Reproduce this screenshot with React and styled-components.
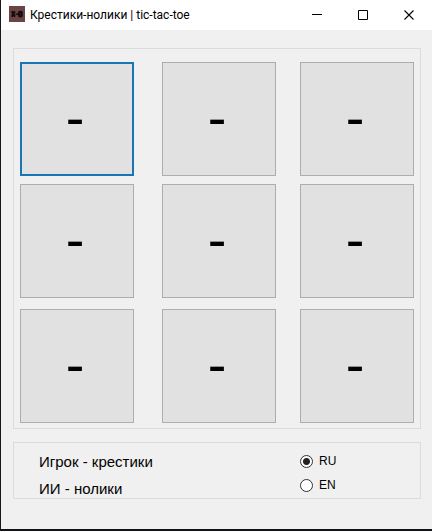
import React, { useState } from 'react'
import styled, { createGlobalStyle } from 'styled-components'

const texts = {
  RU: { player: 'Игрок - крестики', ai: 'ИИ - нолики' },
  EN: { player: 'Player - crosses', ai: 'AI - noughts' },
}

const App = () => {

  const [board, setBoard] = useState(Array(9).fill('-'))
  const [active, setActive] = useState(0)
  const [lang, setLang] = useState('RU')

  const handleMove = (index) => {
    setActive(index)
    if (board[index] !== '-') return
    setBoard(board.map((cell, i) => (i === index ? 'X' : cell)))
  }

  return (
    <>
      <GlobalStyle />
      <Window>
        <TitleBar>
          <AppIcon viewBox="0 0 16 16" aria-hidden="true">
            <rect width="16" height="16" fill="#6b4543" />
            <path d="M2.8 5.3l3 5.4M5.8 5.3l-3 5.4" stroke="#150b0c" strokeWidth="2" />
            <path d="M6.5 8.2h2.5" stroke="#150b0c" strokeWidth="1.5" />
            <rect x="10" y="5.8" width="2.8" height="4.6" rx="1" fill="#3a2021" stroke="#150b0c" strokeWidth="2" />
          </AppIcon>
          <Title>Крестики-нолики | tic-tac-toe</Title>
          <WindowButton aria-label="Minimize">
            <svg width="11" height="11" viewBox="0 0 11 11"><path d="M0 4.5h10" stroke="#000" /></svg>
          </WindowButton>
          <WindowButton aria-label="Maximize">
            <svg width="11" height="11" viewBox="0 0 11 11"><path d="M.5 .5h9v9h-9z" fill="none" stroke="#000" /></svg>
          </WindowButton>
          <WindowButton aria-label="Close">
            <svg width="11" height="11" viewBox="0 0 11 11"><path d="M.5 .5l9 9M9.5 .5l-9 9" stroke="#000" strokeWidth="1.1" /></svg>
          </WindowButton>
        </TitleBar>
        <Content>
          <Board>
            {[0, 3, 6].map((start) => (
              <Row key={start}>
                {board.slice(start, start + 3).map((cell, i) => (
                  <Cell key={start + i} $active={active === start + i} onClick={() => handleMove(start + i)}>
                    {cell}
                  </Cell>
                ))}
              </Row>
            ))}
          </Board>
          <Info>
            <Players>
              <p>{texts[lang].player}</p>
              <p>{texts[lang].ai}</p>
            </Players>
            <Languages>
              {['RU', 'EN'].map((code) => (
                <RadioLabel key={code} htmlFor={`lang-${code}`}>
                  <Radio id={`lang-${code}`} name="lang" checked={lang === code} onChange={() => setLang(code)} />
                  {code}
                </RadioLabel>
              ))}
            </Languages>
          </Info>
        </Content>
      </Window>
    </>
  )
}

const GlobalStyle = createGlobalStyle`
  * {
    box-sizing: border-box;
  }
  body {
    margin: 0;
    font-family: "Liberation Sans", Arial, sans-serif;
    color: #000;
  }
`

const Window = styled.div`
  display: flex;
  flex-direction: column;
  min-height: 100vh;
  background-color: #f0f0f0;
  border-left: 1px solid #1a1718;
  border-bottom: 2px solid #101214;
`

const TitleBar = styled.header`
  display: flex;
  align-items: center;
  height: 30px;
  padding-left: 8px;
  background-color: #fff;
`

const AppIcon = styled.svg`
  width: 16px;
  height: 16px;
  margin-bottom: 2px;
`

const Title = styled.h1`
  flex: 1;
  margin: 0 0 0 5px;
  font-family: Roboto, "Open Sans", sans-serif;
  font-size: 12px;
  font-weight: 400;
  line-height: 16px;
`

const WindowButton = styled.button`
  display: flex;
  align-items: center;
  justify-content: center;
  width: 46px;
  height: 28px;
  padding: 0;
  border: none;
  background: transparent;
`

const Content = styled.main`
  flex: 1;
  padding: 18px 11px 16px 12px;
`

const Board = styled.section`
  padding: 13px 6px 5px;
  border: 1px solid #dcdcdc;
`

const Row = styled.div`
  display: flex;
  &:nth-child(2) {
    margin: 8px 0 11px;
  }
`

const Cell = styled.button`
  flex: 1;
  aspect-ratio: 1;
  padding: 0 4px 2px 0;
  border: 1px solid ${({ $active }) => ($active ? '#1a75b5' : '#adadad')};
  box-shadow: ${({ $active }) => ($active ? 'inset 0 0 0 1px #1a75b5' : 'none')};
  background-color: #e1e1e1;
  font-family: inherit;
  font-size: 56px;
  line-height: 64px;
  color: #000;
  outline: none;
  &:nth-child(1) {
    margin-right: 28px;
  }
  &:nth-child(2) {
    margin-right: 24px;
  }
`

const Info = styled.section`
  display: flex;
  justify-content: space-between;
  margin-top: 13px;
  padding-left: 25px;
  border: 1px solid #dcdcdc;
`

const Players = styled.div`
  display: flex;
  flex-direction: column;
  gap: 9px;
  padding-top: 10px;
  p {
    margin: 0;
    font-size: 15px;
    line-height: 18px;
  }
`

const Languages = styled.div`
  width: 120px;
  padding-top: 6px;
`

const RadioLabel = styled.label`
  display: flex;
  align-items: center;
  gap: 6px;
  height: 24px;
  font-size: 12px;
`

const Radio = styled.input.attrs({ type: 'radio' })`
  appearance: none;
  width: 13px;
  height: 13px;
  margin: 0;
  border: 1px solid #333;
  border-radius: 50%;
  background-color: #fff;
  &:checked {
    background-image: radial-gradient(circle, #222 3px, transparent 4px);
  }
`

export default App
